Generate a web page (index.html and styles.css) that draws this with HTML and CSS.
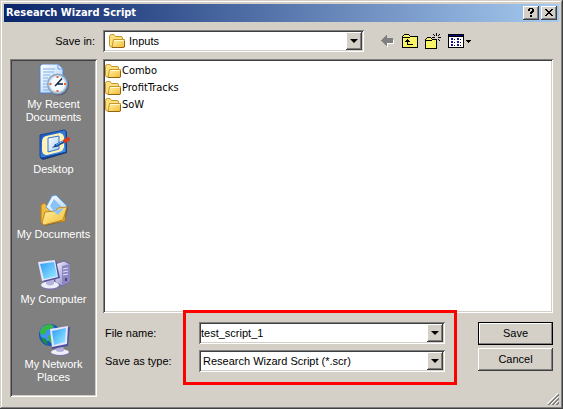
FILE: index.html
```html
<!DOCTYPE html>
<html lang="en">
<head>
<meta charset="utf-8">
<meta name="viewport" content="width=device-width, initial-scale=1">
<title>Research Wizard Script</title>
<link rel="stylesheet" href="styles.css">
</head>
<body>
<svg class="defs" aria-hidden="true">
  <defs>
    <linearGradient id="gold" x1="0" y1="0" x2="1" y2="1"><stop offset="0" stop-color="#fff3a8"/><stop offset="1" stop-color="#f2bc34"/></linearGradient>
    <linearGradient id="paper" x1="0" y1="0" x2="1" y2="1"><stop offset="0" stop-color="#fff"/><stop offset="1" stop-color="#a9cdf5"/></linearGradient>
    <linearGradient id="screen" x1="0" y1="0" x2="1" y2="1"><stop offset="0" stop-color="#2d9df5"/><stop offset="1" stop-color="#9cecff"/></linearGradient>
    <linearGradient id="blue" x1="0" y1="0" x2="1" y2="1"><stop offset="0" stop-color="#1c50b8"/><stop offset="1" stop-color="#4aa4f4"/></linearGradient>
    <linearGradient id="metal" x1="0" y1="0" x2="1" y2="1"><stop offset="0" stop-color="#f4f4ff"/><stop offset="1" stop-color="#8480bc"/></linearGradient>
    <symbol id="folder" viewBox="0 0 16 16">
      <path d="M.5 12V3.500Q.5 1.500 2.500 1.500H5l1.500 2H12q1.500 0 1.500 1.500V7L4 14H2.500Q.5 14 .5 12Z" fill="#fbe07c" stroke="#c8962a"/>
      <path d="M3 14.500 4.500 6.500h11V13q0 1.500-1.500 1.500Z" fill="url(#gold)" stroke="#c8962a"/>
      <path d="M3 14.500h11.500q1 0 1-1.500V8" fill="none" stroke="#94640c"/>
      <path d="M5 7.500h9.500" stroke="#fffbd5"/>
    </symbol>
  </defs>
</svg>
<main class="window">
  <header class="titlebar">
    <h1 class="title">Research Wizard Script</h1>
    <button class="caption" type="button" aria-label="Help">
      <svg width="8" height="10" viewBox="0 0 8 10" shape-rendering="crispEdges"><path d="M1 1h1V0h4v1h1v3H6v1H5v1H3V4h1V3h1V1H3v2H1ZM3 7h2v2H3Z"/></svg>
    </button>
    <button class="caption" type="button" aria-label="Close">
      <svg width="8" height="8" viewBox="0 0 8 8" shape-rendering="crispEdges"><path d="M0 0h2v1h1v1h2V1h1V0h2v1H7v1H6v1H5v1h1v1h1v1h1v1H6V6H5V5H3v1H2v1H0V6h1V5h1V4h1V3H2V2H1V1H0Z"/></svg>
    </button>
  </header>

  <form class="dialog">
    <div class="toolbar">
      <label class="lookin" for="folder-select">Save in:</label>
      <div class="combo combo-folder">
        <svg class="folder" width="16" height="16"><use href="#folder"/></svg>
        <select id="folder-select" class="field"><option>Inputs</option></select>
        <span class="arrow"></span>
      </div>
      <div class="tools">
        <button class="tool" type="button" aria-label="Back">
          <svg width="14" height="12" viewBox="0 0 14 12" shape-rendering="crispEdges"><path d="M12 5h1v4H7v3H6V8h6Z" fill="#fff"/><path d="M0 5h1V4h1V3h1V2h1V1h1V0h1v3h6v5H6v3H5v-1H4V9H3V8H2V7H1V6H0Z" fill="#808080"/></svg>
        </button>
        <button class="tool" type="button" aria-label="Up one level">
          <svg width="16" height="14" viewBox="0 0 16 14" shape-rendering="crispEdges"><path d="M1 2h1V1h5v1h8v11H1Z" fill="#f8f468"/><path d="M0 2h1v12H0ZM1 1h1v1H1ZM2 0h5v1H2ZM7 1h1v1H7ZM8 2h7v1H8ZM15 2h1v12h-1ZM0 13h16v1H0ZM1 3h7v1H1Z"/><path d="M5 5h1v1h1v1h1v1H6v2h5v1H5V8H3V7h1V6h1Z"/></svg>
        </button>
        <button class="tool" type="button" aria-label="Create new folder">
          <svg width="16" height="16" viewBox="0 0 16 16" shape-rendering="crispEdges"><path d="M1 6h1V5h4v1h5v9H1Z" fill="#f8f468"/><path d="M0 6h1v10H0ZM1 5h1v1H1ZM2 4h4v1H2ZM6 5h1v1H6ZM7 6h4v1H7ZM11 7h1v9h-1ZM0 15h12v1H0ZM1 7h6v1H1Z"/><path d="M11 0h1v3h-1ZM11 6h1v2h-1ZM8 1h1v1H8ZM9 2h1v1H9ZM7 4h3v1H7ZM13 4h3v1h-3ZM13 2h1v1h-1ZM14 1h1v1h-1ZM13 6h1v1h-1ZM14 7h1v1h-1ZM9 6h1v1H9Z"/></svg>
        </button>
        <button class="tool" type="button" aria-label="View menu">
          <svg width="24" height="14" viewBox="0 0 24 14" shape-rendering="crispEdges"><path d="M0 0h16v14H0Z"/><path d="M1 3h14v10H1Z" fill="#fff"/><path d="M1 1h14v1H1Z" fill="#000080"/><path d="M3 4h2v2H3ZM3 7h2v2H3ZM3 10h2v2H3ZM9 4h2v2H9ZM9 7h2v2H9ZM9 10h2v2H9Z" fill="#1414a0"/><path d="M6 5h1v1H6ZM6 8h1v1H6ZM6 11h1v1H6ZM12 5h1v1h-1ZM12 8h1v1h-1ZM12 11h1v1h-1ZM18 6h5v1h-1v1h-1v1h-1V8h-1V7h-1Z"/></svg>
        </button>
      </div>
    </div>

    <div class="body">
      <nav class="places" aria-label="Places">
        <button class="place" type="button">
          <svg width="32" height="32" viewBox="0 0 32 32">
            <path d="M2 29V2L4 0h16l5 5v24Z" fill="url(#paper)" stroke="#4c82d2"/>
            <path d="M20 0v5h5Z" fill="#d9edff" stroke="#6b9cdd"/>
            <path d="M5 5h12M5 8h11M5 11h7M5 14h5M5 17h4M5 20h4M5 23h5M5 26h6" stroke="#80b1ec"/>
            <circle cx="20.500" cy="21" r="10.500" fill="#555c70"/>
            <circle cx="19.500" cy="20" r="10.500" fill="#8ea3bd"/>
            <circle cx="19.500" cy="20" r="9" fill="#c5ddf5"/>
            <circle cx="19.500" cy="20" r="7.500" fill="#f4faff"/>
            <path d="M19.500 12v2M19.500 26v2M11.500 20h2M26 20h2" stroke="#f26522" stroke-width="2"/>
            <path d="M24 14.500 19 20h6M19 20l-2 2" fill="none" stroke="#17243c" stroke-width="1.500"/>
          </svg>
          <span>My Recent<br>Documents</span>
        </button>
        <button class="place" type="button">
          <svg width="32" height="32" viewBox="0 0 32 32">
            <path d="M3 8 27 2q2 0 2 2v20L5 31l-3-2V9Z" fill="#173a79"/>
            <path d="M2 6 26 1q2 0 2 2v20L4 29q-2 0-2-2Z" fill="url(#blue)" stroke="#12459e"/>
            <path d="M8 7 22 4q4 1 4 5v9q-1 4-5 5L9 26q-5 0-5-5v-8q0-5 4-6Z" fill="#fff3b9"/>
            <path d="m10 9 11-2v13l-11 3Z" fill="url(#paper)" stroke="#3176cf"/>
            <path d="m14 19 4-4 3 2Z" fill="#1c4680"/>
            <path d="m17 17 10-5" stroke="#154d97" stroke-width="3"/><path d="m18 16 9-5" stroke="#67b3ff"/>
            <path d="m27 12 3-2" stroke="#d63c1c" stroke-width="4" stroke-linecap="round"/>
          </svg>
          <span>Desktop</span>
        </button>
        <button class="place" type="button">
          <svg width="32" height="32" viewBox="0 0 32 32">
            <path d="M6 31 5 10l22 0 3 4-3 13-20 5Z" fill="#5b481b" opacity=".5"/>
            <path d="M3 28V11l3-2 4 3 17-1v16L6 30Z" fill="#f0bd42" stroke="#bd7d17"/>
            <path d="M8 13 14 2l4-1 11 11-9 12Z" fill="url(#paper)" stroke="#5b9be2"/>
            <path d="m12 12 4-7 8 8-7 6Z" fill="#8ac2f6"/>
            <path d="M4 29 7 18l10-1 3-3 9-1-4 13-19 5Z" fill="url(#gold)" stroke="#c28a20"/>
            <path d="m15 17 11-3-6 7Z" fill="#8dc5f5"/>
          </svg>
          <span>My Documents</span>
        </button>
        <button class="place" type="button">
          <svg width="32" height="32" viewBox="0 0 32 32">
            <path d="m17 5 9-3 6 3v18l-8 4-7-4Z" fill="url(#metal)" stroke="#6b66a5"/>
            <path d="m24 7 8-2v18l-8 4Z" fill="#8c87c2"/><path d="m25 10 5-1M25 13l5-1M25 16l5-1" stroke="#e5e3ff"/>
            <path d="M28 19v3" stroke="#49447f" stroke-width="2"/>
            <ellipse cx="13" cy="27" rx="10" ry="4" fill="#7874a5"/><ellipse cx="12" cy="26" rx="9" ry="3.500" fill="#eeeefa"/>
            <path d="M9 18h7v7q-4 3-8 0Z" fill="#b5b3dc"/>
            <path d="M1 4 18 1l4 18-16 4Z" fill="#4e529e"/><path d="M0 3 17 1l3 17-16 4Z" fill="#e5e5ff"/><path d="m2 5 14-2 3 14-13 3Z" fill="url(#screen)"/>
          </svg>
          <span>My Computer</span>
        </button>
        <button class="place" type="button">
          <svg width="32" height="32" viewBox="0 0 32 32">
            <circle cx="12" cy="11" r="11" fill="#1757b8"/><circle cx="10" cy="9" r="8" fill="#3f93ee"/>
            <path d="M2 7q3-6 10-7l4 2-3 3-4 1-2 4-4 1Zm8 5 5-2 3 4-3 7-4-4Z" fill="#34b844"/><path d="m3 13 5 2 2 6-5-3Z" fill="#1e8e3c"/>
            <ellipse cx="23" cy="29" rx="9" ry="3" fill="#7773a3"/><ellipse cx="22" cy="28" rx="9" ry="3" fill="#eeeefa"/>
            <path d="M19 20h6l1 7q-4 2-8 0Z" fill="#b2afd8"/>
            <path d="m13 6 19-3-2 19-16 3Z" fill="#4b5098"/><path d="m12 5 18-3-1 18-15 3Z" fill="#e5e5ff"/><path d="m14 7 14-3-1 14-11 3Z" fill="url(#screen)"/>
          </svg>
          <span>My Network<br>Places</span>
        </button>
      </nav>

      <div class="content">
        <ul class="files">
          <li class="file"><svg width="16" height="16"><use href="#folder"/></svg>Combo</li>
          <li class="file"><svg width="16" height="16"><use href="#folder"/></svg>ProfitTracks</li>
          <li class="file"><svg width="16" height="16"><use href="#folder"/></svg>SoW</li>
        </ul>
        <div class="footer">
          <div class="fields">
            <label for="file-name">File name:</label>
            <div class="combo">
              <input id="file-name" class="field field-text" type="text" value="test_script_1">
              <span class="arrow"></span>
            </div>
            <label for="file-type">Save as type:</label>
            <div class="combo">
              <select id="file-type" class="field"><option>Research Wizard Script (*.scr)</option></select>
              <span class="arrow"></span>
            </div>
          </div>
          <div class="actions">
            <button class="action action-default" type="submit">Save</button>
            <button class="action" type="button">Cancel</button>
          </div>
        </div>
      </div>
    </div>
  </form>
  <svg class="grip" width="12" height="12" viewBox="0 0 12 12" aria-hidden="true"><path d="M0 11 11 0M4 11l7-7M8 11l3-3" stroke="#fff"/><path d="M1 12 12 1M2 12 12 2M5 12l7-7M6 12l6-6M9 12l3-3M10 12l2-2" stroke="#808080"/></svg>
</main>
</body>
</html>
```
FILE: styles.css
```css
* { box-sizing: border-box; }

body {
  margin: 0;
  background: #d4d0c8;
  color: #000;
  font: 11px/13px "Liberation Sans", Arial, sans-serif;
}

button, input, select { font: inherit; color: inherit; }
button { padding: 0; border: 0; background: none; }
svg { display: block; flex: none; }
.defs { position: absolute; width: 0; height: 0; }

.window {
  position: relative;
  display: flex;
  flex-direction: column;
  min-height: 100vh;
  padding: 4px;
  box-shadow: inset -1px -1px #404040, inset 1px 1px #d4d0c8, inset -2px -2px #808080, inset 2px 2px #fff;
}

.titlebar {
  display: flex;
  align-items: center;
  gap: 2px;
  height: 18px;
  padding: 0 2px;
  background: linear-gradient(to right, #0a246a, #a6caf0);
}

.title {
  flex: 1;
  margin: 0;
  color: #fff;
  font: bold 11px/18px "DejaVu Sans Condensed", "DejaVu Sans", sans-serif;
}

.caption {
  display: flex;
  align-items: center;
  justify-content: center;
  width: 16px;
  height: 14px;
}

.caption, .arrow, .action {
  background: #d4d0c8;
  box-shadow: inset -1px -1px #404040, inset 1px 1px #fff, inset -2px -2px #808080;
}

.dialog {
  display: flex;
  flex: 1;
  flex-direction: column;
  gap: 7px;
  padding: 8px 6px;
}

.toolbar { display: flex; align-items: center; }

.lookin {
  width: 93px;
  padding-right: 8px;
  text-align: right;
}

.combo {
  position: relative;
  display: flex;
  align-items: center;
  height: 22px;
  padding: 2px;
}

.combo, .files {
  background: #fff;
  box-shadow: inset 1px 1px #808080, inset -1px -1px #fff, inset 2px 2px #404040, inset -2px -2px #d4d0c8;
}

.combo-folder { flex: 1; }
.folder { margin-left: 4px; }

.field {
  flex: 1;
  min-width: 0;
  height: 18px;
  padding: 0 2px;
  border: 0;
  outline: 0;
  background: transparent;
  appearance: none;
}

.field-text { padding: 0; }
.combo-folder .field { padding: 0 4px; }

.arrow {
  display: flex;
  align-items: center;
  justify-content: center;
  width: 16px;
  height: 18px;
  pointer-events: none;
}

.arrow::before {
  width: 8px;
  height: 4px;
  background: #000;
  clip-path: polygon(0 0, 100% 0, 50% 100%);
  content: "";
}

.tools {
  display: flex;
  align-items: center;
  gap: 7px;
  margin: 0 81px 0 17px;
}

.body { display: flex; flex: 1; gap: 6px; }

.places {
  width: 87px;
  padding: 5px 2px 8px;
  background: #808080;
  box-shadow: inset 1px 1px #808080, inset -1px -1px #fff, inset 2px 2px #404040, inset -2px -2px #d4d0c8;
}

.place {
  display: flex;
  flex-direction: column;
  align-items: center;
  gap: 2px;
  width: 100%;
  height: 65px;
  color: #fff;
  text-align: center;
}

.content {
  display: flex;
  flex: 1;
  flex-direction: column;
  gap: 9px;
  padding-bottom: 25px;
}

.files {
  flex: 1;
  margin: 0;
  padding: 3px 2px;
  list-style: none;
}

.file {
  display: flex;
  align-items: center;
  gap: 1px;
  height: 17px;
  font-family: "DejaVu Sans Condensed", "DejaVu Sans", sans-serif;
}

.footer { display: flex; align-items: start; gap: 33px; }

.fields {
  position: relative;
  display: grid;
  flex: 1;
  grid-template-columns: 92px 1fr;
  align-items: center;
  gap: 6px 2px;
  padding-left: 2px;
}

.fields::after {
  position: absolute;
  inset: -12px -12px -13px 80px;
  border: 3px solid #f00;
  pointer-events: none;
  content: "";
}

.actions {
  display: flex;
  flex-direction: column;
  gap: 3px;
  width: 75px;
}

.action { height: 23px; }

.action-default {
  border: 1px solid #000;
  box-shadow: inset -1px -1px #808080, inset 1px 1px #fff;
}

.grip { position: absolute; right: 4px; bottom: 4px; }
```
